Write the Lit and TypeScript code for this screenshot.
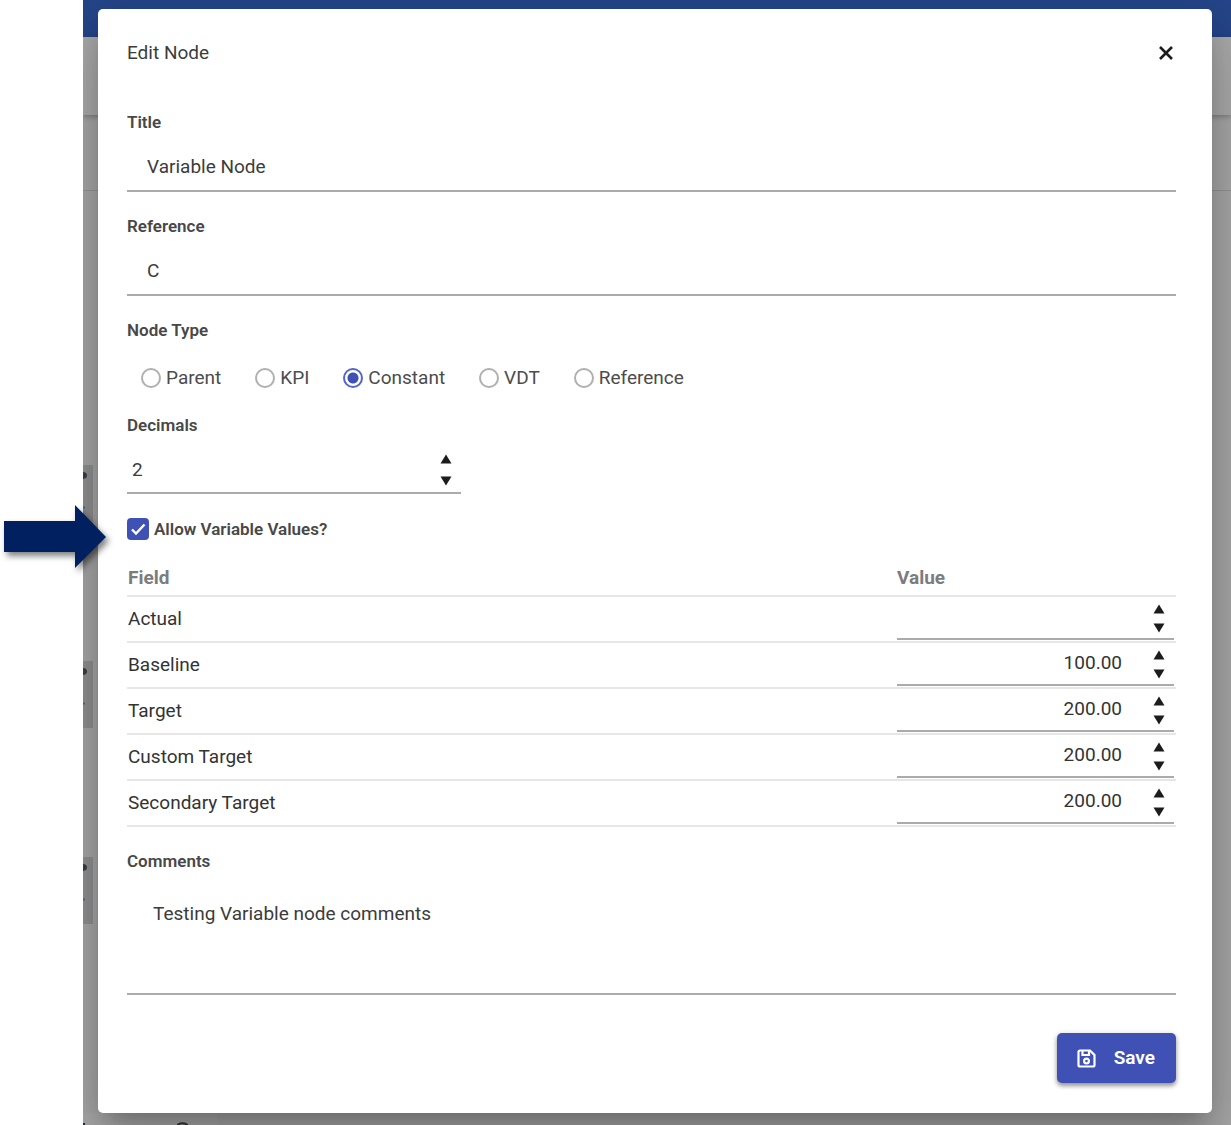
import { LitElement, html, css, svg } from "lit";
import { customElement, property, state } from "lit/decorators.js";

@customElement("number-field")
class NumberField extends LitElement {
  @property() value = "";
  @property() label = "";
  @property({ type: Boolean, reflect: true }) compact = false;

  static styles = css`
    :host {
      display: block;
    }
    .box {
      display: flex;
      align-items: center;
      box-sizing: border-box;
      height: 47px;
      padding-right: 8px;
      border-bottom: 2px solid #ababab;
    }
    .input {
      flex: 1;
      min-width: 0;
      box-sizing: border-box;
      height: 100%;
      padding: 0 5px;
      border: 0;
      outline: 0;
      background: transparent;
      color: #3c3c3c;
      font: inherit;
      appearance: textfield;
      -moz-appearance: textfield;
    }
    .input::-webkit-inner-spin-button,
    .input::-webkit-outer-spin-button {
      appearance: none;
      -webkit-appearance: none;
      margin: 0;
    }
    .steps {
      display: flex;
      flex-direction: column;
    }
    .step {
      display: flex;
      align-items: center;
      justify-content: center;
      width: 14px;
      height: 22px;
      padding: 0;
      border: 0;
      background: none;
      color: #1c1c1c;
      cursor: pointer;
    }
    .glyph {
      display: block;
      width: 12px;
      height: 10px;
    }
    :host([compact]) .box {
      height: 43px;
    }
    :host([compact]) .input {
      padding: 0 30px 2px 5px;
      text-align: right;
      color: #333;
    }
    :host([compact]) .steps {
      padding-top: 2px;
    }
    :host([compact]) .step {
      height: 19px;
    }
  `;

  private step(by: number) {
    const digits = (this.value.split(".")[1] ?? "").length;
    this.value = (Number(this.value || 0) + by).toFixed(digits);
  }

  render() {
    return html`
      <div class="box">
        <input
          class="input"
          type="number"
          step="any"
          aria-label=${this.label}
          .value=${this.value}
          @input=${(e: Event) => (this.value = (e.target as HTMLInputElement).value)}
        />
        <div class="steps">
          <button class="step" type="button" aria-label="Increase ${this.label}" @click=${() => this.step(1)}>
            <svg class="glyph" viewBox="0 0 12 10"><path d="M6 0.500 11.500 9.500H0.500z" fill="currentColor" /></svg>
          </button>
          <button class="step" type="button" aria-label="Decrease ${this.label}" @click=${() => this.step(-1)}>
            <svg class="glyph" viewBox="0 0 12 10"><path d="M0.500 0.500H11.500L6 9.500z" fill="currentColor" /></svg>
          </button>
        </div>
      </div>
    `;
  }
}

const NODE_TYPES = ["Parent", "KPI", "Constant", "VDT", "Reference"];

const ROWS = [
  { field: "Actual", value: "" },
  { field: "Baseline", value: "100.00" },
  { field: "Target", value: "200.00" },
  { field: "Custom Target", value: "200.00" },
  { field: "Secondary Target", value: "200.00" },
];

@customElement("app-root")
class AppRoot extends LitElement {
  @state() private nodeType = "Constant";

  static styles = css`
    :host {
      display: block;
      position: relative;
      background: #fff;
      color: #3c3c3c;
      font: 400 19px/24px Roboto, "Liberation Sans", sans-serif;
    }
    .stage {
      position: relative;
      overflow: hidden;
      margin-left: 83px;
      padding: 9px 19px 12px 15px;
    }
    .backdrop {
      position: absolute;
      inset: 0;
      display: flex;
      flex-direction: column;
      background: #a9a9a9;
    }
    .appbar {
      height: 37px;
      background: #25468a;
    }
    .toolbar {
      height: 78px;
      background: #acacac;
      box-shadow: 0 2px 5px rgba(0, 0, 0, 0.25);
    }
    .subbar {
      height: 75px;
      border-bottom: 1px solid #959595;
    }
    .cards {
      display: flex;
      flex-direction: column;
      gap: 129px;
      padding-top: 274px;
    }
    .card {
      width: 10px;
      height: 67px;
      background: #919191;
    }
    .mark {
      display: block;
      width: 10px;
      height: 67px;
    }
    .footer {
      display: flex;
      margin-top: auto;
      height: 12px;
    }
    .tree {
      width: 134px;
      background: #acacac;
    }
    .tree svg {
      display: block;
    }
    .dialog {
      position: relative;
      box-sizing: border-box;
      padding: 32px 36px 30px 29px;
      border-radius: 5px;
      background: #fff;
      box-shadow:
        0 15px 20px -9px rgba(0, 0, 0, 0.2),
        0 32px 50px 4px rgba(0, 0, 0, 0.14),
        0 12px 61px 11px rgba(0, 0, 0, 0.12);
    }
    .head {
      display: flex;
      align-items: center;
      justify-content: space-between;
      margin-bottom: 45px;
    }
    .heading {
      margin: 0;
      font: inherit;
    }
    .close {
      display: flex;
      align-items: center;
      justify-content: center;
      width: 20px;
      height: 24px;
      padding: 0;
      border: 0;
      background: none;
      color: #1c1c1c;
      cursor: pointer;
    }
    .close svg {
      width: 16px;
      height: 16px;
    }
    .form {
      display: flex;
      flex-direction: column;
      gap: 22px;
    }
    .field {
      display: flex;
      flex-direction: column;
      gap: 10px;
      margin: 0;
      padding: 0;
      border: 0;
      min-width: 0;
    }
    .label {
      padding: 0;
      font-size: 17px;
      font-weight: 600;
      color: #484848;
    }
    .text {
      box-sizing: border-box;
      width: 100%;
      height: 48px;
      padding: 0 20px 2px;
      border: 0;
      border-bottom: 2px solid #ababab;
      border-radius: 0;
      outline: 0;
      background: transparent;
      color: inherit;
      font: inherit;
    }
    .area {
      height: 112px;
      padding: 19px 26px;
      resize: none;
    }
    .radios {
      display: flex;
      flex-wrap: wrap;
      gap: 0 34px;
      padding: 13px 0 0 14px;
    }
    .radio {
      display: flex;
      align-items: center;
      gap: 5px;
      height: 26px;
      color: #4c4c4c;
    }
    .dot {
      appearance: none;
      box-sizing: border-box;
      width: 20px;
      height: 20px;
      margin: 0;
      border: 2px solid #b0b0b0;
      border-radius: 50%;
      background: #fff;
    }
    .dot:checked {
      border-color: #5566c8;
      background: radial-gradient(circle, #3f51b5 5px, #fff 6px);
    }
    .narrow {
      width: 32%;
      max-width: 334px;
      margin-bottom: 1px;
    }
    .allow {
      display: flex;
      align-items: center;
      gap: 5px;
    }
    .tick {
      position: relative;
      display: flex;
      width: 22px;
      height: 22px;
    }
    .check {
      appearance: none;
      width: 22px;
      height: 22px;
      margin: 0;
      border: 2px solid #b0b0b0;
      border-radius: 4px;
    }
    .check:checked {
      border-color: #3f51b5;
      background: #3f51b5;
    }
    .tick svg {
      position: absolute;
      inset: 0;
      pointer-events: none;
    }
    .values {
      width: 100%;
      margin-top: -2px;
      border-collapse: separate;
      border-spacing: 0;
      table-layout: fixed;
    }
    .values th,
    .values td {
      padding: 0 1px;
      border-bottom: 2px solid #e6e6e6;
      text-align: left;
    }
    .values th {
      height: 34px;
      font-weight: 700;
      color: #7c7c7c;
    }
    .values td {
      height: 44px;
      color: #333;
    }
    .values .amount {
      width: 277px;
      padding: 0 2px 0 0;
    }
    .values td.amount {
      vertical-align: top;
    }
    .actions {
      display: flex;
      justify-content: flex-end;
      margin-top: 16px;
    }
    .save {
      display: flex;
      align-items: center;
      gap: 18px;
      height: 50px;
      padding: 0 21px 0 20px;
      border: 0;
      border-radius: 5px;
      background: #3f51b5;
      box-shadow: 0 3px 4px rgba(0, 0, 0, 0.35), 0 1px 6px rgba(0, 0, 0, 0.15);
      color: #fff;
      font: inherit;
      font-weight: 600;
      cursor: pointer;
    }
    .save svg {
      width: 19px;
      height: 19px;
    }
    .pointer {
      position: absolute;
      left: 0;
      top: 500px;
      width: 120px;
      height: 84px;
      filter: drop-shadow(3px 4px 3px rgba(0, 0, 0, 0.5));
      pointer-events: none;
    }
  `;

  private mark() {
    return svg`
      <path d="M0 7Q4 7 4 10.500 4 13.500 0 14z" fill="#3a3f48" />
      <path d="M0 41.500H2V43.500H0z" fill="#4a6a94" />
    `;
  }

  render() {
    return html`
      <div class="stage">
        <div class="backdrop" aria-hidden="true">
          <div class="appbar"></div>
          <div class="toolbar"></div>
          <div class="subbar"></div>
          <div class="cards">
            ${[0, 1, 2].map(
              () => html`<div class="card"><svg class="mark" viewBox="0 0 10 67">${this.mark()}</svg></div>`
            )}
          </div>
          <div class="footer">
            <div class="tree">
              <svg width="134" height="12" viewBox="0 0 134 12">
                <path d="M0 10H2V12H0z" fill="#1d2c4a" />
                <path d="M94.500 12.500C96 9.500 103 9.500 104.500 12.500" fill="none" stroke="#333" stroke-width="2" />
              </svg>
            </div>
          </div>
        </div>

        <div class="dialog" role="dialog" aria-labelledby="heading">
          <header class="head">
            <h1 class="heading" id="heading">Edit Node</h1>
            <button class="close" type="button" aria-label="Close">
              <svg viewBox="0 0 16 16">
                <path d="M2 2 14 14M14 2 2 14" stroke="currentColor" stroke-width="2.600" />
              </svg>
            </button>
          </header>

          <form class="form" @submit=${(e: Event) => e.preventDefault()}>
            <div class="field">
              <label class="label" for="title">Title</label>
              <input class="text" id="title" type="text" value="Variable Node" />
            </div>

            <div class="field">
              <label class="label" for="reference">Reference</label>
              <input class="text" id="reference" type="text" value="C" />
            </div>

            <div class="field" role="radiogroup" aria-labelledby="node-type">
              <span class="label" id="node-type">Node Type</span>
              <div class="radios">
                ${NODE_TYPES.map(
                  (name) => html`
                    <label class="radio">
                      <input
                        class="dot"
                        type="radio"
                        name="node-type"
                        value=${name}
                        .checked=${name === this.nodeType}
                        @change=${() => (this.nodeType = name)}
                      />${name}
                    </label>
                  `
                )}
              </div>
            </div>

            <div class="field narrow">
              <span class="label">Decimals</span>
              <number-field label="Decimals" value="2"></number-field>
            </div>

            <label class="allow label">
              <span class="tick">
                <input class="check" type="checkbox" checked />
                <svg width="22" height="22" viewBox="0 0 22 22">
                  <path d="M5 11.500 9 15.500 17.500 6.500" fill="none" stroke="#fff" stroke-width="2.400" />
                </svg>
              </span>
              Allow Variable Values?
            </label>

            <table class="values">
              <thead>
                <tr>
                  <th scope="col">Field</th>
                  <th class="amount" scope="col">Value</th>
                </tr>
              </thead>
              <tbody>
                ${ROWS.map(
                  (row) => html`
                    <tr>
                      <td>${row.field}</td>
                      <td class="amount">
                        <number-field compact label=${row.field} value=${row.value}></number-field>
                      </td>
                    </tr>
                  `
                )}
              </tbody>
            </table>

            <div class="field">
              <label class="label" for="comments">Comments</label>
              <textarea class="text area" id="comments" .value=${"Testing Variable node comments"}></textarea>
            </div>

            <div class="actions">
              <button class="save" type="submit">
                <svg viewBox="0 0 19 19" fill="none" stroke="currentColor" stroke-width="2.200">
                  <path d="M1.500 3Q1.500 1.500 3 1.500H13L17.500 6V16Q17.500 17.500 16 17.500H3Q1.500 17.500 1.500 16Z" />
                  <path d="M5.500 1.500V6H12V1.500" />
                  <circle cx="9.500" cy="12" r="2.400" />
                </svg>
                Save
              </button>
            </div>
          </form>
        </div>
      </div>

      <svg class="pointer" viewBox="0 0 120 84" aria-hidden="true">
        <path d="M4 21H75V5L106 37 75 68V52H4Z" fill="#002060" />
      </svg>
    `;
  }
}
